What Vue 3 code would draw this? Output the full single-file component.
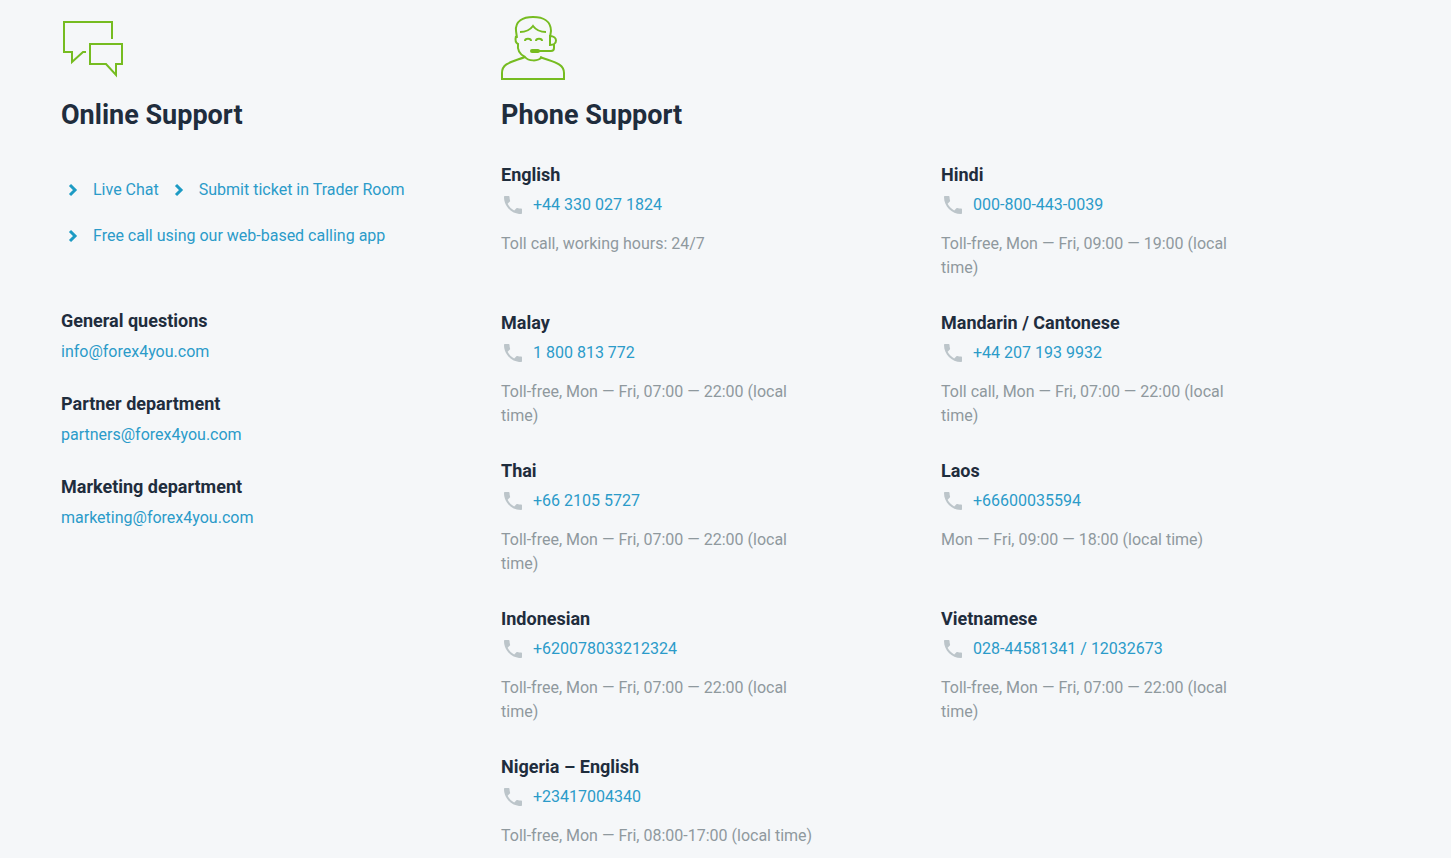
<template>
  <main class="support">
    <section class="online">
      <svg class="section-icon" viewBox="0 0 64 64" aria-hidden="true">
        <path d="M51 23V6H3v30h8v10l11-10h3" />
        <path d="M29 28h32v20h-6v11L45 48H29z" />
      </svg>
      <h2 class="section-title">Online Support</h2>

      <nav class="actions">
        <a v-for="action in actions" :key="action" href="#" class="action">
          <svg class="chevron" viewBox="0 0 24 24" aria-hidden="true">
            <path d="M9 7l5 5-5 5" />
          </svg>
          <span>{{ action }}</span>
        </a>
      </nav>

      <ul class="departments">
        <li v-for="department in departments" :key="department.email">
          <h3 class="item-title">{{ department.name }}</h3>
          <a class="email" :href="'mailto:' + department.email">{{ department.email }}</a>
        </li>
      </ul>
    </section>

    <section class="phone">
      <svg class="section-icon" viewBox="0 0 64 64" aria-hidden="true">
        <path d="M24 41C11 46 1 47 1 57v6h62v-6C63 47 52 46 39 41" />
        <path d="M16 22l-1-7C14 5 22 1 32 1s18 4 18 14l-1 6v8" />
        <path d="M15 20c-1 4 0 7 2 8-1 7 3 11 7 13 3 4 13 5 17 0" />
        <path d="M19 16c6 0 10-2 13-6 3 4 7 6 13 6" />
        <path d="M24 25c0-3 6-3 6 0M35 25c0-3 6-3 6 0" />
        <path d="M49 20c8 0 8 9 0 9zM53 28v4c0 2-1 3-3 3H37" />
        <rect class="filled" x="29" y="33" width="10" height="4" rx="2" />
      </svg>
      <h2 class="section-title">Phone Support</h2>

      <ul class="phones">
        <li v-for="line in phoneLines" :key="line.language">
          <h3 class="item-title">{{ line.language }}</h3>
          <a class="phone-link" :href="'tel:' + line.phone">
            <svg class="handset" viewBox="0 0 24 24" aria-hidden="true">
              <path d="M6.620 10.790c1.440 2.830 3.760 5.140 6.590 6.590l2.200-2.200c.27-.27.67-.36 1.020-.24 1.120.37 2.330.57 3.570.57.55 0 1 .45 1 1V20c0 .55-.45 1-1 1-9.390 0-17-7.610-17-17 0-.55.45-1 1-1h3.500c.55 0 1 .45 1 1 0 1.250.2 2.450.57 3.570.11.35.03.74-.25 1.020z" />
            </svg>
            <span>{{ line.phone }}</span>
          </a>
          <p class="hours">{{ line.hours }}</p>
        </li>
      </ul>
    </section>
  </main>
</template>

<script setup>
const actions = [
  'Live Chat',
  'Submit ticket in Trader Room',
  'Free call using our web-based calling app',
];

const departments = [
  { name: 'General questions', email: 'info@forex4you.com' },
  { name: 'Partner department', email: 'partners@forex4you.com' },
  { name: 'Marketing department', email: 'marketing@forex4you.com' },
];

const phoneLines = [
  { language: 'English', phone: '+44 330 027 1824', hours: 'Toll call, working hours: 24/7' },
  { language: 'Hindi', phone: '000-800-443-0039', hours: 'Toll-free, Mon — Fri, 09:00 — 19:00 (local time)' },
  { language: 'Malay', phone: '1 800 813 772', hours: 'Toll-free, Mon — Fri, 07:00 — 22:00 (local time)' },
  { language: 'Mandarin / Cantonese', phone: '+44 207 193 9932', hours: 'Toll call, Mon — Fri, 07:00 — 22:00 (local time)' },
  { language: 'Thai', phone: '+66 2105 5727', hours: 'Toll-free, Mon — Fri, 07:00 — 22:00 (local time)' },
  { language: 'Laos', phone: '+66600035594', hours: 'Mon — Fri, 09:00 — 18:00 (local time)' },
  { language: 'Indonesian', phone: '+620078033212324', hours: 'Toll-free, Mon — Fri, 07:00 — 22:00 (local time)' },
  { language: 'Vietnamese', phone: '028-44581341 / 12032673', hours: 'Toll-free, Mon — Fri, 07:00 — 22:00 (local time)' },
  { language: 'Nigeria – English', phone: '+23417004340', hours: 'Toll-free, Mon — Fri, 08:00-17:00 (local time)' },
];
</script>

<style>
body {
  margin: 0;
  background: #f5f7f9;
}
</style>

<style scoped>
.support {
  display: grid;
  grid-template-columns: 1fr 2fr;
  padding: 16px 70px 10px 61px;
  color: #1f2d3d;
  font-family: Roboto, 'Liberation Sans', sans-serif;
  font-size: 16px;
  line-height: 24px;
}

.section-icon {
  display: block;
  width: 64px;
  height: 64px;
  fill: none;
  stroke: #76bc21;
  stroke-width: 2;
}

.section-icon .filled {
  fill: #76bc21;
  stroke: none;
}

.section-title {
  margin: 16px 0 29px;
  font-size: 27px;
  font-weight: 700;
  line-height: 38px;
}

ul {
  margin: 0;
  padding: 0;
  list-style: none;
}

a {
  color: #2b9bc9;
  text-decoration: none;
}

.actions {
  display: flex;
  flex-wrap: wrap;
  column-gap: 8px;
  padding-top: 4px;
}

.action {
  display: flex;
  align-items: center;
  gap: 8px;
  height: 46px;
}

.chevron {
  width: 24px;
  height: 24px;
  fill: none;
  stroke: #1d9bc4;
  stroke-width: 3;
}

.departments {
  display: grid;
  gap: 28px;
  margin-top: 50px;
}

.item-title {
  margin: 0;
  font-size: 18px;
  font-weight: 700;
  line-height: 24px;
}

.email {
  display: block;
  margin-top: 7px;
}

.phones {
  display: grid;
  grid-template-columns: 1fr 1fr;
  row-gap: 31px;
}

.phone-link {
  display: flex;
  align-items: center;
  gap: 8px;
  margin-top: 6px;
}

.handset {
  width: 24px;
  height: 24px;
  fill: #bcc5ca;
}

.hours {
  max-width: 320px;
  margin: 15px 0 0;
  color: #8f999e;
}
</style>
